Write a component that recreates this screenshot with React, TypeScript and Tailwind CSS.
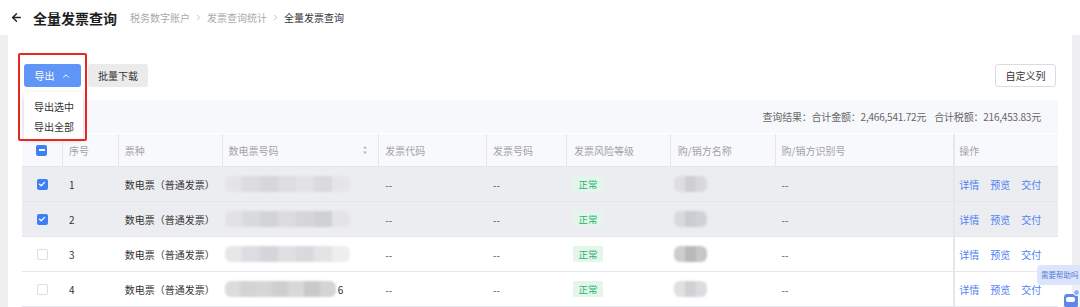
import { ArrowLeft, ChevronUp, ChevronRight } from 'lucide-react';

type Row = { no: number; checked: boolean; blur: string[]; tail?: string; name: string[] };

const rows: Row[] = [
    { no: 1, checked: true, blur: ['#e4e4e7', '#dcdcdf', '#d6d7da', '#dedee1', '#e2e1e4', '#dadadd', '#e6e6e8'], name: ['#dedee0', '#cfcfd2', '#d9d9dc'] },
    { no: 2, checked: true, blur: ['#e2e2e5', '#d9dadd', '#d2d4d8', '#dcdcdf', '#d6d6da', '#cfd1d4', '#e4e4e7'], name: ['#d8d9dc', '#c9cdd1', '#d0d2d6'] },
    { no: 3, checked: false, blur: ['#e7e7e9', '#dcdde0', '#d6d6da', '#e0e0e3', '#d9dadd', '#e3e5e4', '#eeeeef'], name: ['#cfcdcc', '#b9b9bb', '#c6c5c7'] },
    { no: 4, checked: false, blur: ['#dcdcde', '#d3d3d6', '#d6d6d9', '#cfcfd2', '#d8d8da', '#c9c9cb', '#d4d4d6'], tail: '6', name: ['#e2dfe1', '#d2d0d4', '#dcdcde'] },
];

const cols = ['w-[41px]', 'w-[56px]', 'w-[104px]', 'w-[157px]', 'w-[108px]', 'w-[80px]', 'w-[104px]', 'w-[105px]', 'w-[178px]', 'w-[105px]'];

const Checkbox = ({ state }: { state: 'on' | 'off' | 'some' }) => {
    if (state === 'off') {
        return <div className="w-[11px] h-[11px] rounded-[2px] border border-[#dcdfe6] bg-white" />;
    }
    return (
        <div className="w-[11px] h-[11px] rounded-[2px] bg-[#3f7ef5] flex items-center justify-center">
            {state === 'some' ? (
                <div className="w-[6px] h-[1.5px] bg-white" />
            ) : (
                <svg width="8" height="8" viewBox="0 0 8 8">
                    <path d="M1.5 4.2 L3.3 5.8 L6.5 2.4" stroke="white" strokeWidth="1.3" fill="none" strokeLinecap="round" strokeLinejoin="round" />
                </svg>
            )}
        </div>
    );
};

const Blur = ({ colors, width }: { colors: string[]; width: string }) => (
    <div className={`flex h-[16px] ${width} rounded-[6px] overflow-hidden blur-[1px]`}>
        {colors.map((c, i) => (
            <div key={i} className="flex-1 h-full" style={{ backgroundColor: c }} />
        ))}
    </div>
);

const App = () => {
    return (
        <div className="w-[1080px] h-[307px] overflow-hidden relative bg-[#f0f0f2] font-['Noto_Sans_CJK_SC','Noto_Sans',sans-serif] text-[#333]">
            {/* Page header */}
            <div className="h-[35px] bg-white flex items-center pl-[10px]">
                <ArrowLeft size={13} strokeWidth={2.6} className="text-[#222]" />
                <span className="ml-[10px] text-[14px] font-bold text-[#1f1f1f] leading-none">全量发票查询</span>
                <div className="ml-[13px] flex items-center text-[10px] text-[#a9a9ab] leading-none">
                    <span>税务数字账户</span>
                    <ChevronRight size={9} className="mx-[4px] text-[#a9a9ab]" />
                    <span>发票查询统计</span>
                    <ChevronRight size={9} className="mx-[4px] text-[#a9a9ab]" />
                    <span className="text-[#333]">全量发票查询</span>
                </div>
            </div>

            <div className="px-[8px]">
                <div className="bg-white h-[280px] px-[14px] pt-[29px]">
                    {/* Toolbar */}
                    <div className="flex items-center justify-between h-[23px]">
                        <div className="flex items-center gap-[7px] pl-[2px]">
                            <div className="relative">
                                <button className="h-[23px] w-[57px] rounded-[3px] bg-[#5f95f6] text-white text-[10px] flex items-center justify-center gap-[6px]">
                                    导出
                                    <ChevronUp size={10} strokeWidth={2.4} />
                                </button>
                                {/* Dropdown menu */}
                                <div className="absolute left-0 top-[28px] w-[59px] h-[48px] bg-white rounded-[3px] shadow-[0_1px_4px_rgba(0,0,0,0.15)] flex flex-col justify-center gap-[7px] pl-[10px] text-[10px] text-[#333] z-10">
                                    <span className="leading-[13px]">导出选中</span>
                                    <span className="leading-[13px]">导出全部</span>
                                </div>
                                {/* Annotation box */}
                                <div className="absolute left-[-6px] top-[-11px] w-[69px] h-[88px] border-2 border-[#e8271f] rounded-[2px] z-20" />
                            </div>
                            <button className="h-[23px] w-[60px] rounded-[3px] bg-[#ebebec] text-[10px] text-[#333]">批量下载</button>
                        </div>
                        <button className="h-[23px] w-[61px] mr-[2px] rounded-[3px] border border-[#dcdcdf] bg-white text-[10px] text-[#333]">自定义列</button>
                    </div>

                    {/* Summary */}
                    <div className="mt-[13px] h-[33px] bg-[#f7f8fb] flex items-center justify-end pr-[17px] text-[10px] text-[#666] gap-[8px] tracking-[-0.2px]">
                        <span>查询结果：合计金额：2,466,541.72元</span>
                        <span>合计税额：216,453.83元</span>
                    </div>

                    {/* Table header */}
                    <div className="mt-[1px] h-[33px] bg-[#f8f9fc] flex text-[10px] text-[#a3a3a6] border-b border-[#e6e7ea]">
                        <div className={`${cols[0]} flex items-center justify-center border-r border-[#e6e7ea]`}>
                            <Checkbox state="some" />
                        </div>
                        <div className={`${cols[1]} flex items-center pl-[6px] border-r border-[#e6e7ea]`}>序号</div>
                        <div className={`${cols[2]} flex items-center pl-[6px] border-r border-[#e6e7ea]`}>票种</div>
                        <div className={`${cols[3]} flex items-center justify-between pl-[6px] pr-[10px] border-r border-[#e6e7ea]`}>
                            <span>数电票号码</span>
                            <svg width="6" height="10" viewBox="0 0 6 10">
                                <path d="M3 1 L5 3.5 L1 3.5 Z" fill="#b5b5b8" />
                                <path d="M3 9 L5 6.5 L1 6.5 Z" fill="#b5b5b8" />
                            </svg>
                        </div>
                        <div className={`${cols[4]} flex items-center pl-[6px] border-r border-[#e6e7ea]`}>发票代码</div>
                        <div className={`${cols[5]} flex items-center pl-[6px] border-r border-[#e6e7ea]`}>发票号码</div>
                        <div className={`${cols[6]} flex items-center pl-[7px] border-r border-[#e6e7ea]`}>发票风险等级</div>
                        <div className={`${cols[7]} flex items-center pl-[7px] border-r border-[#e6e7ea]`}>购/销方名称</div>
                        <div className={`w-[178px] flex items-center pl-[6px]`}>购/销方识别号</div>
                        <div className={`${cols[9]} flex items-center pl-[4px] border-l-2 border-[#e6e7ea]`}>操作</div>
                    </div>

                    {/* Table body */}
                    {rows.map((r) => (
                        <div
                            key={r.no}
                            className={`h-[35px] flex text-[10px] text-[#333] border-b border-[#e6e7ea] ${r.checked ? 'bg-[#ecedf0]' : 'bg-white'}`}
                        >
                            <div className={`${cols[0]} flex items-center justify-center`}>
                                <Checkbox state={r.checked ? 'on' : 'off'} />
                            </div>
                            <div className={`${cols[1]} flex items-center pl-[6px]`}>{r.no}</div>
                            <div className={`${cols[2]} flex items-center pl-[6px]`}>数电票（普通发票）</div>
                            <div className={`${cols[3]} flex items-center pl-[2px]`}>
                                <Blur colors={r.blur} width={r.tail ? 'w-[111px]' : 'w-[125px]'} />
                                {r.tail && <span className="ml-[2px]">{r.tail}</span>}
                            </div>
                            <div className={`${cols[4]} flex items-center pl-[6px] text-[#555]`}>--</div>
                            <div className={`${cols[5]} flex items-center pl-[6px] text-[#555]`}>--</div>
                            <div className={`${cols[6]} flex items-center pl-[6px]`}>
                                <span className="h-[16px] w-[30px] rounded-[2px] bg-[#e4f6ec] text-[#28b36c] text-[9.5px] flex items-center justify-center">正常</span>
                            </div>
                            <div className={`${cols[7]} flex items-center pl-[3px]`}>
                                <Blur colors={r.name} width="w-[33px]" />
                            </div>
                            <div className="w-[178px] flex items-center pl-[6px] text-[#555]">--</div>
                            <div className={`${cols[9]} flex items-center gap-[11px] pl-[4px] border-l-2 border-[#e6e7ea] text-[#4f80f2]`}>
                                <span>详情</span>
                                <span>预览</span>
                                <span>交付</span>
                            </div>
                        </div>
                    ))}
                </div>
            </div>

            {/* Help widget */}
            <div className="absolute right-0 top-[265px] w-[43px] h-[20px] rounded-l-[4px] bg-[#dbe6fd] flex items-center pl-[4px] text-[7.5px] text-[#5a7bd4] whitespace-nowrap">
                需要帮助吗
            </div>
            <div className="absolute right-0 top-[289px] w-[18px] h-[18px] overflow-hidden">
                <div className="absolute left-[1px] top-[4px] w-[16px] h-[16px] rounded-[4px] bg-[#5d86e8] border border-white" />
                <div className="absolute left-[4px] top-[8px] w-[9px] h-[5px] rounded-[2px] bg-white" />
                <div className="absolute right-[0px] top-[0px] w-[7px] h-[7px] rounded-full bg-[#8fb0f5] border border-white" />
            </div>
        </div>
    );
};

export default App;
